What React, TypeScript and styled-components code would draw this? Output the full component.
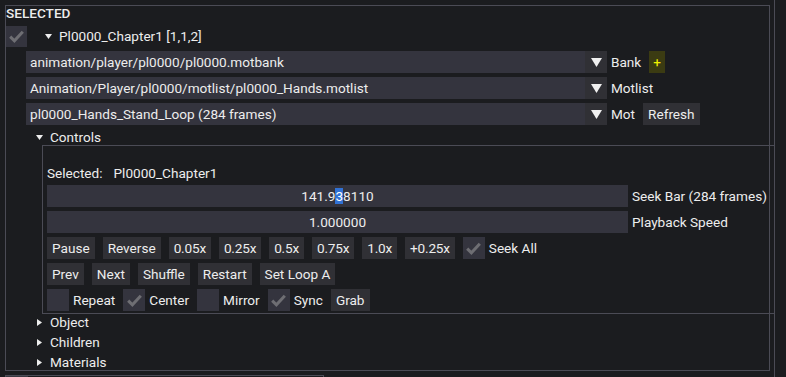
import React from "react";
import styled, { createGlobalStyle, css } from "styled-components";

const GlobalStyle = createGlobalStyle`
	html, body {
		margin: 0;
		padding: 0;
		background: #1b1c1f;
	}
	body {
		font-family: Roboto, "Liberation Sans", sans-serif;
		font-size: 13.6px;
		font-weight: 400;
		color: #ededed;
		overflow: hidden;
	}
`;

const FRAME_BG = "#34343e";
const BUTTON_BG = "#303035";
const LINE = "#4b4b55";

const Page = styled.div`
	display: flex;
	width: 786px;
	height: 377px;
`;

const LeftColumn = styled.div`
	display: flex;
	flex-direction: column;
	padding: 5px 0 0 5px;
`;

const Frame = styled.section`
	box-sizing: border-box;
	width: 765px;
	height: 366px;
	border: 1px solid ${LINE};
	display: flex;
	flex-direction: column;
	gap: 4px;
`;

const Divider = styled.div`
	width: 1px;
	height: 100%;
	margin-left: 4px;
	background: ${LINE};
`;

const BottomStub = styled.div`
	box-sizing: border-box;
	margin-top: 4px;
	width: 319px;
	height: 2px;
	border: 1px solid ${LINE};
	border-bottom: none;
	& > span {
		display: block;
		width: 22px;
		height: 1px;
		background: #3a3a42;
	}
`;

const Heading = styled.div`
	height: 15px;
	line-height: 15px;
	white-space: nowrap;
	font-weight: 500;
`;

const Row = styled.div<{ $indent?: number; $height?: number }>`
	display: flex;
	align-items: center;
	height: ${(p) => p.$height ?? 22}px;
	margin-left: ${(p) => p.$indent ?? 0}px;
	white-space: nowrap;
`;

const Label = styled.span<{ $gap?: number }>`
	margin-left: ${(p) => p.$gap ?? 4}px;
	line-height: 16px;
`;

const Box = styled.span<{ $size?: number }>`
	display: flex;
	align-items: center;
	justify-content: center;
	width: ${(p) => p.$size ?? 22}px;
	height: ${(p) => p.$size ?? 22}px;
	background: ${FRAME_BG};
	flex: none;
`;

const Button = styled.span<{ $accent?: boolean; $tight?: boolean }>`
	display: inline-flex;
	align-items: center;
	height: 22px;
	padding: 0 5px;
	background: ${BUTTON_BG};
	line-height: 16px;
	${(p) =>
		p.$tight &&
		css`
			letter-spacing: -0.2px;
		`}
	${(p) =>
		p.$accent &&
		css`
			padding: 0 4px;
			background: #3b3b12;
			color: #f2f200;
		`}
`;

const ButtonRow = styled.div`
	display: flex;
	align-items: center;
	gap: 8px;
	height: 22px;
	white-space: nowrap;
`;

const Combo = styled.div`
	display: flex;
	width: 581px;
	height: 22px;
	background: ${FRAME_BG};
	& > span {
		flex: 1;
		padding-left: 4px;
		line-height: 22px;
	}
	& > i {
		display: flex;
		align-items: center;
		justify-content: center;
		width: 22px;
		background: ${BUTTON_BG};
	}
`;

const InputField = styled.div`
	width: 581px;
	height: 22px;
	line-height: 22px;
	background: ${FRAME_BG};
	text-align: center;
	& mark {
		background: #3172d5;
		color: #ffffff;
	}
`;

const TreeArrow = styled.span`
	display: inline-flex;
	width: 8px;
	justify-content: center;
	margin-right: 7px;
`;

const ChildBox = styled.div`
	box-sizing: border-box;
	margin-left: 36px;
	width: 733px;
	height: 171px;
	margin-top: -4px;
	margin-bottom: -4px;
	border: 1px solid ${LINE};
	padding: 19px 0 0 4px;
	display: flex;
	flex-direction: column;
	gap: 4px;
`;

const Check = () => (
	<svg width="15" height="13" viewBox="0 0 15 13">
		<path d="M1.2 6.6 L5.4 10.8 L13.8 1.8" fill="none" stroke="#6e6e73" strokeWidth="3" />
	</svg>
);

const Checkbox = ({ checked, size }: { checked?: boolean; size?: number }) => (
	<Box $size={size}>{checked && <Check />}</Box>
);

const Arrow = ({ open }: { open?: boolean }) => (
	<TreeArrow>
		<svg width="7" height="7" viewBox="0 0 7 7">
			{open ? <polygon points="0,1 7,1 3.5,6" fill="#ededed" /> : <polygon points="1,0 6,3.5 1,7" fill="#ededed" />}
		</svg>
	</TreeArrow>
);

const TreeNode = ({ label, open, indent }: { label: string; open?: boolean; indent: number }) => (
	<Row $indent={indent} $height={16}>
		<Arrow open={open} />
		{label}
	</Row>
);

const ComboRow = ({ value, label, children }: { value: string; label: string; children?: React.ReactNode }) => (
	<Row $indent={20}>
		<Combo>
			<span>{value}</span>
			<i>
				<svg width="11" height="9" viewBox="0 0 11 9">
					<polygon points="0,0 11,0 5.5,9" fill="#f0f0f0" />
				</svg>
			</i>
		</Combo>
		<Label>{label}</Label>
		{children}
	</Row>
);

const CheckItem = ({ label, checked }: { label: string; checked?: boolean }) => (
	<Row>
		<Checkbox checked={checked} />
		<Label>{label}</Label>
	</Row>
);

const speeds = ["0.05x", "0.25x", "0.5x", "0.75x", "1.0x", "+0.25x"];

const App = () => {
	return (
		<>
			<GlobalStyle />
			<Page>
				<LeftColumn>
					<Frame>
						<Heading>SELECTED</Heading>
						<Row>
							<Checkbox checked size={21} />
							<Row $indent={17}>
								<Arrow open />
								Pl0000_Chapter1 [1,1,2]
							</Row>
						</Row>
						<ComboRow value="animation/player/pl0000/pl0000.motbank" label="Bank">
							<Button $accent style={{ marginLeft: 8 }}>+</Button>
						</ComboRow>
						<ComboRow value="Animation/Player/pl0000/motlist/pl0000_Hands.motlist" label="Motlist" />
						<ComboRow value="pl0000_Hands_Stand_Loop (284 frames)" label="Mot">
							<Button style={{ marginLeft: 8 }}>Refresh</Button>
						</ComboRow>
						<TreeNode label="Controls" open indent={29} />
						<ChildBox>
							<Row $height={16}>
								Selected:<Label $gap={11}>Pl0000_Chapter1</Label>
							</Row>
							<Row>
								<InputField>
									141.9<mark>3</mark>8110
								</InputField>
								<Label>Seek Bar (284 frames)</Label>
							</Row>
							<Row>
								<InputField>1.000000</InputField>
								<Label>Playback Speed</Label>
							</Row>
							<ButtonRow>
								<Button>Pause</Button>
								<Button>Reverse</Button>
								{speeds.map((b) => (
									<Button key={b} $tight>
										{b}
									</Button>
								))}
								<CheckItem label="Seek All" checked />
							</ButtonRow>
							<ButtonRow>
								{["Prev", "Next", "Shuffle", "Restart", "Set Loop A"].map((b) => (
									<Button key={b}>{b}</Button>
								))}
							</ButtonRow>
							<ButtonRow>
								<CheckItem label="Repeat" />
								<CheckItem label="Center" checked />
								<CheckItem label="Mirror" />
								<CheckItem label="Sync" checked />
								<Button>Grab</Button>
							</ButtonRow>
						</ChildBox>
						<TreeNode label="Object" indent={29} />
						<TreeNode label="Children" indent={29} />
						<TreeNode label="Materials" indent={29} />
					</Frame>
					<BottomStub>
						<span />
					</BottomStub>
				</LeftColumn>
				<Divider />
			</Page>
		</>
	);
};

export default App;
